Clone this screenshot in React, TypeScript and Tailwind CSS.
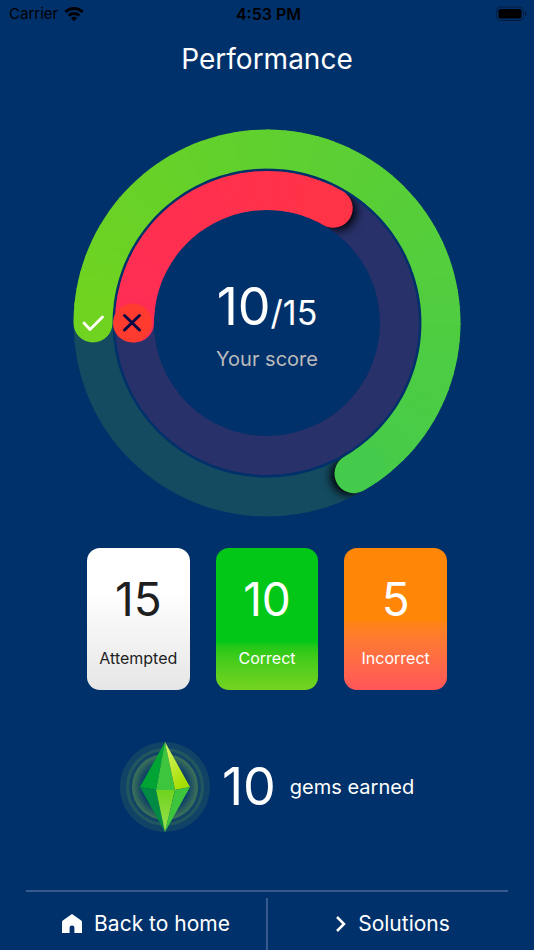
import { ReactNode } from 'react';

type Stat = { value: number; label: string; className: string };

const stats: Stat[] = [
  { value: 15, label: 'Attempted', className: 'bg-linear-to-b from-white from-30% to-[#e6e6e6] text-[#1f1f1f]' },
  { value: 10, label: 'Correct', className: 'bg-linear-to-b from-[#02c717] from-66% to-[#74d321] text-white' },
  { value: 5, label: 'Incorrect', className: 'bg-linear-to-b from-[#ff8606] from-50% to-[#ff5558] text-white' },
];

const WifiIcon = () => (
  <svg className="w-5 h-4" viewBox="0 0 20 16" fill="none" stroke="#000" strokeWidth="3">
    <path d="M1.4 5.8a12.6 12.6 0 0 1 17.2 0" />
    <path d="M4.7 9.5a7.8 7.8 0 0 1 10.6 0" />
    <path d="M10 15.2 6.9 12.1a4.6 4.6 0 0 1 6.2 0z" fill="#000" stroke="none" />
  </svg>
);

const BatteryIcon = () => (
  <svg className="w-8 h-4" viewBox="0 0 32 16">
    <rect x="0.5" y="1" width="27" height="13.5" rx="4" fill="none" stroke="#000" strokeOpacity="0.4" />
    <rect x="2.5" y="3" width="23" height="9.5" rx="2" fill="#000" />
    <path d="M29 5.5c2 .8 2 3.9 0 4.6z" fill="#000" fillOpacity="0.5" />
  </svg>
);

const StatusBar = () => (
  <div className="grid grid-cols-3 items-center h-7 pl-[9px] pr-1.5 text-black">
    <div className="flex items-center gap-1.5 text-[15px]">
      Carrier
      <WifiIcon />
    </div>
    <div className="text-center text-[16px] font-semibold">4:53 PM</div>
    <div className="flex justify-end">
      <BatteryIcon />
    </div>
  </div>
);

type ArcProps = { radius: number; sweep: number; from: number[]; to: number[] };

// Arc that starts at nine o'clock, its colour changing along the way
const Arc = ({ radius, sweep, from, to }: ArcProps) => {
  const steps = sweep / 5;
  const point = (deg: number) => {
    const a = ((180 + deg) * Math.PI) / 180;
    return `${200 + radius * Math.cos(a)} ${200 + radius * Math.sin(a)}`;
  };
  return (
    <g strokeWidth="39">
      {Array.from({ length: steps }, (_, i) => {
        const color = from.map((c, n) => Math.round(c + ((to[n] - c) * i) / (steps - 1)));
        const end = Math.min(i * 5 + 5.5, sweep);
        return (
          <path
            key={i}
            d={`M${point(i * 5)}A${radius} ${radius} 0 0 1 ${point(end)}`}
            stroke={`rgb(${color.join(',')})`}
            strokeLinecap={i === 0 || i === steps - 1 ? 'round' : 'butt'}
          />
        );
      })}
    </g>
  );
};

const ScoreRings = () => (
  <svg className="w-full" viewBox="0 0 400 400" fill="none">
    <defs>
      <filter id="soft" x="-100%" y="-100%" width="300%" height="300%">
        <feGaussianBlur stdDeviation="5" />
      </filter>
      <mask id="outer" maskUnits="userSpaceOnUse" x="0" y="0" width="400" height="400">
        <circle cx="200" cy="200" r="174" stroke="#fff" strokeWidth="39" />
      </mask>
      <mask id="inner" maskUnits="userSpaceOnUse" x="0" y="0" width="400" height="400">
        <circle cx="200" cy="200" r="132.5" stroke="#fff" strokeWidth="39" />
      </mask>
    </defs>

    {/* Tracks */}
    <circle cx="200" cy="200" r="174" stroke="#144b60" strokeWidth="39" />
    <circle cx="200" cy="200" r="132.5" stroke="#283169" strokeWidth="39" />

    {/* Shadows under the leading ends */}
    <g mask="url(#outer)">
      <circle cx="283" cy="353" r="19" fill="#000" filter="url(#soft)" />
    </g>
    <g mask="url(#inner)">
      <circle cx="270" cy="88" r="19" fill="#000" filter="url(#soft)" />
    </g>

    <Arc radius={174} sweep={240} from={[112, 211, 31]} to={[69, 203, 75]} />
    <Arc radius={132.5} sweep={120} from={[255, 45, 85]} to={[255, 51, 71]} />

    <path d="m17 200 6 6.5L35.5 194" stroke="#fff" strokeWidth="2.8" strokeLinecap="round" strokeLinejoin="round" />
    <circle cx="65.5" cy="200" r="19.5" fill="#ff3b30" />
    <path d="m57.5 192.5 15 14.5m0-14.5-15 14.5" stroke="#0b0b45" strokeWidth="3" strokeLinecap="round" />
  </svg>
);

const StatCard = ({ value, label, className }: Stat) => (
  <div className={`flex flex-col items-center rounded-[13px] pt-6 pb-[22px] ${className}`}>
    <span className="text-[46px] leading-[54px]">{value}</span>
    <span className="mt-[22px] text-[16px] leading-5">{label}</span>
  </div>
);

const GemIcon = () => (
  <svg className="w-[90px] h-[90px]" viewBox="0 0 90 90">
    <defs>
      <radialGradient id="glow">
        <stop offset="0.6" stopColor="#8cc63f" stopOpacity="0" />
        <stop offset="1" stopColor="#8cc63f" stopOpacity="0.45" />
      </radialGradient>
      <linearGradient id="shine" x1="0" y1="0" x2="0.6" y2="1">
        <stop offset="0" stopColor="#dcf56a" />
        <stop offset="1" stopColor="#a4de00" />
      </linearGradient>
      <linearGradient id="base" x1="0" y1="0" x2="0" y2="1">
        <stop offset="0" stopColor="#6fd31d" />
        <stop offset="1" stopColor="#9be050" />
      </linearGradient>
    </defs>
    <circle cx="45" cy="45" r="45" fill="#8cc63f" fillOpacity="0.12" />
    <circle cx="45" cy="45" r="39" fill="#8cc63f" fillOpacity="0.15" />
    <circle cx="45" cy="45" r="36" fill="#00316b" fillOpacity="0.5" />
    <circle cx="45" cy="45" r="33" fill="#00316b" />
    <circle cx="45" cy="45" r="33" fill="url(#glow)" />
    <path d="M45 0 20 45l16 3z" fill="#00a435" />
    <path d="M45 0 36 48h19z" fill="#3dc53d" />
    <path d="M45 0 55 48l15-3z" fill="url(#shine)" />
    <path d="m20 45 16 3 9 42z" fill="#008a43" />
    <path d="M36 48h19L45 90z" fill="url(#base)" />
    <path d="m55 48 15-3-25 45z" fill="#3dc53d" />
  </svg>
);

const FooterButton = ({ className, children }: { className: string; children: ReactNode }) => (
  <button className={`flex items-center justify-center text-[21px] leading-[52px] cursor-pointer ${className}`}>
    {children}
  </button>
);

export default function App() {
  return (
    <div className="min-h-screen flex flex-col bg-[#00316b] text-white font-['Inter','Liberation_Sans',sans-serif]">
      <StatusBar />

      <h1 className="mt-[13px] text-center text-[28px] leading-9">Performance</h1>

      <main className="flex flex-col items-center">
        <div className="relative w-full max-w-[400px] mt-[46px]">
          <ScoreRings />
          <div className="absolute inset-0 flex flex-col items-center justify-center pt-2">
            <div className="leading-[52px]">
              <span className="text-[52px]">10</span>
              <span className="text-[34px]">/15</span>
            </div>
            <p className="text-[20px] leading-7 text-[#bbbbbb]">Your score</p>
          </div>
        </div>

        <div className="grid grid-cols-3 gap-[26px] w-full max-w-[360px] mt-[25px]">
          {stats.map((stat) => (
            <StatCard key={stat.label} {...stat} />
          ))}
        </div>

        <div className="flex items-center mt-[52px]">
          <GemIcon />
          <span className="ml-3 text-[52px] leading-[60px]">10</span>
          <span className="ml-3.5 text-[20px] leading-7">gems earned</span>
        </div>
      </main>

      <footer className="mt-auto">
        <hr className="mx-[26px] border-t-2 border-[#365a8e]" />
        <div className="grid grid-cols-[1fr_2px_1fr] mt-1.5">
          <FooterButton className="pl-[26px]">
            <svg className="w-5 h-5 mr-3" viewBox="0 0 20 20" fill="#fff">
              <path d="M10 0 .8 6.6Q0 7.2 0 8v10.5q0 .5.5.5H7q.6 0 .6-.6v-4.900q0-2 2.400-2t2.400 2v4.900q0 .6.6.6h6.5q.5 0 .5-.5V8q0-.8-.8-1.400z" />
            </svg>
            Back to home
          </FooterButton>
          <div className="bg-[#365a8e]" />
          <FooterButton className="pr-4">
            <svg className="w-2.5 h-4 mr-3" viewBox="0 0 10 16" fill="none" stroke="#fff" strokeWidth="2.5">
              <path d="m1 1 7 7-7 7" />
            </svg>
            Solutions
          </FooterButton>
        </div>
      </footer>
    </div>
  );
}
